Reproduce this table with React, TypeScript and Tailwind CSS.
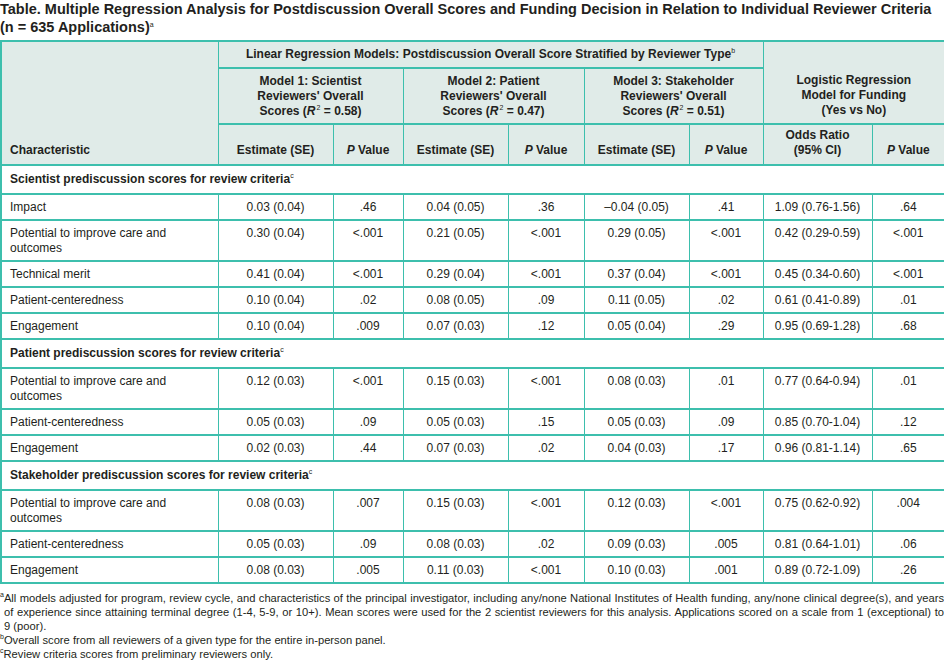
import React from "react";

type Row = string[];

interface Section {
  title: string;
  rows: Row[];
}

const SECTIONS: Section[] = [
  {
    title: "Scientist prediscussion scores for review criteria",
    rows: [
      ["Impact", "0.03 (0.04)", ".46", "0.04 (0.05)", ".36", "\u20130.04 (0.05)", ".41", "1.09 (0.76-1.56)", ".64"],
      ["Potential to improve care and outcomes", "0.30 (0.04)", "<.001", "0.21 (0.05)", "<.001", "0.29 (0.05)", "<.001", "0.42 (0.29-0.59)", "<.001"],
      ["Technical merit", "0.41 (0.04)", "<.001", "0.29 (0.04)", "<.001", "0.37 (0.04)", "<.001", "0.45 (0.34-0.60)", "<.001"],
      ["Patient-centeredness", "0.10 (0.04)", ".02", "0.08 (0.05)", ".09", "0.11 (0.05)", ".02", "0.61 (0.41-0.89)", ".01"],
      ["Engagement", "0.10 (0.04)", ".009", "0.07 (0.03)", ".12", "0.05 (0.04)", ".29", "0.95 (0.69-1.28)", ".68"],
    ],
  },
  {
    title: "Patient prediscussion scores for review criteria",
    rows: [
      ["Potential to improve care and outcomes", "0.12 (0.03)", "<.001", "0.15 (0.03)", "<.001", "0.08 (0.03)", ".01", "0.77 (0.64-0.94)", ".01"],
      ["Patient-centeredness", "0.05 (0.03)", ".09", "0.05 (0.03)", ".15", "0.05 (0.03)", ".09", "0.85 (0.70-1.04)", ".12"],
      ["Engagement", "0.02 (0.03)", ".44", "0.07 (0.03)", ".02", "0.04 (0.03)", ".17", "0.96 (0.81-1.14)", ".65"],
    ],
  },
  {
    title: "Stakeholder prediscussion scores for review criteria",
    rows: [
      ["Potential to improve care and outcomes", "0.08 (0.03)", ".007", "0.15 (0.03)", "<.001", "0.12 (0.03)", "<.001", "0.75 (0.62-0.92)", ".004"],
      ["Patient-centeredness", "0.05 (0.03)", ".09", "0.08 (0.03)", ".02", "0.09 (0.03)", ".005", "0.81 (0.64-1.01)", ".06"],
      ["Engagement", "0.08 (0.03)", ".005", "0.11 (0.03)", "<.001", "0.10 (0.03)", ".001", "0.89 (0.72-1.09)", ".26"],
    ],
  },
];

const COL_WIDTHS = [217, 115, 70, 105, 76, 105, 74, 109, 73];

// shared cell borders: 2px rules between rows, 1px between columns
const cell = "border-x border-y-2 border-[#3dbfad]";
const head = `${cell} bg-[#e0ebe8] font-bold text-center px-2`;

function Sup({ children }: { children: React.ReactNode }) {
  return <sup className="text-[7px] leading-none font-normal align-baseline relative -top-[5px]">{children}</sup>;
}

function PValue() {
  return (
    <>
      <i>P</i> Value
    </>
  );
}

function RSquared({ value }: { value: string }) {
  return (
    <>
      (<i className="pr-px">R</i>
      <Sup>2</Sup> = {value})
    </>
  );
}

export default function App() {
  return (
    <div
      className="w-[944px] h-[663px] overflow-hidden bg-white text-[#231f20]"
      style={{ fontFamily: "'Liberation Sans', Arial, sans-serif" }}
    >
      <h1 className="text-[14.5px] leading-[18px] font-bold whitespace-nowrap">
        Table. Multiple Regression Analysis for Postdiscussion Overall Scores and Funding Decision in Relation to Individual Reviewer Criteria
        <br />
        (n = 635 Applications)<Sup>a</Sup>
      </h1>

      <table className="mt-[4px] w-[944px] table-fixed border-collapse border-2 border-[#3dbfad] text-[12px] leading-[15px]">
        <colgroup>
          {COL_WIDTHS.map((w, i) => (
            <col key={i} style={{ width: w }} />
          ))}
        </colgroup>
        <thead>
          <tr className="h-[27px]">
            <th rowSpan={3} className={`${head} text-left align-bottom pl-[8px] pb-[6px]`}>
              Characteristic
            </th>
            <th colSpan={6} className={`${head} align-middle`}>
              Linear Regression Models: Postdiscussion Overall Score Stratified by Reviewer Type<Sup>b</Sup>
            </th>
            <th colSpan={2} rowSpan={2} className={`${head} align-bottom pb-[5px] px-6`}>
              Logistic Regression Model for Funding (Yes vs No)
            </th>
          </tr>
          <tr className="h-[56px]">
            <th colSpan={2} className={`${head} px-5`}>
              Model 1: Scientist Reviewers' Overall Scores <RSquared value="0.58" />
            </th>
            <th colSpan={2} className={`${head} px-5`}>
              Model 2: Patient Reviewers' Overall Scores <RSquared value="0.47" />
            </th>
            <th colSpan={2} className={`${head} px-5`}>
              Model 3: Stakeholder Reviewers' Overall Scores <RSquared value="0.51" />
            </th>
          </tr>
          <tr className="h-[41px]">
            <th className={`${head} align-bottom pb-[6px]`}>Estimate (SE)</th>
            <th className={`${head} align-bottom pb-[6px]`}><PValue /></th>
            <th className={`${head} align-bottom pb-[6px]`}>Estimate (SE)</th>
            <th className={`${head} align-bottom pb-[6px]`}><PValue /></th>
            <th className={`${head} align-bottom pb-[6px]`}>Estimate (SE)</th>
            <th className={`${head} align-bottom pb-[6px]`}><PValue /></th>
            <th className={`${head} align-bottom pb-[6px] px-4`}>Odds Ratio (95% CI)</th>
            <th className={`${head} align-bottom pb-[6px]`}><PValue /></th>
          </tr>
        </thead>
        <tbody>
          {SECTIONS.map((s) => (
            <React.Fragment key={s.title}>
              <tr>
                <td colSpan={9} className={`${cell} font-bold pl-[8px] pt-[6px] pb-[6px]`}>
                  {s.title}
                  <Sup>c</Sup>
                </td>
              </tr>
              {s.rows.map((r, ri) => (
                <tr key={ri}>
                  {r.map((v, ci) => (
                    <td
                      key={ci}
                      className={`${cell} align-top pt-[5px] pb-[4px] ${ci === 0 ? "text-left pl-[8px] pr-2" : "text-center px-1"}`}
                    >
                      {v}
                    </td>
                  ))}
                </tr>
              ))}
            </React.Fragment>
          ))}
        </tbody>
      </table>

      <div className="mt-[7px] text-[11.2px] leading-[14px] text-justify">
        <p className="pl-[4px] -indent-[4px]">
          <Sup>a</Sup>All models adjusted for program, review cycle, and characteristics of the principal investigator, including any/none National Institutes of Health funding, any/none clinical degree(s), and years of experience since attaining terminal degree (1-4, 5-9, or 10+). Mean scores were used for the 2 scientist reviewers for this analysis. Applications scored on a scale from 1 (exceptional) to 9{"\u00a0"}(poor).
        </p>
        <p>
          <Sup>b</Sup>Overall score from all reviewers of a given type for the entire in-person panel.
        </p>
        <p>
          <Sup>c</Sup>Review criteria scores from preliminary reviewers only.
        </p>
      </div>
    </div>
  );
}
